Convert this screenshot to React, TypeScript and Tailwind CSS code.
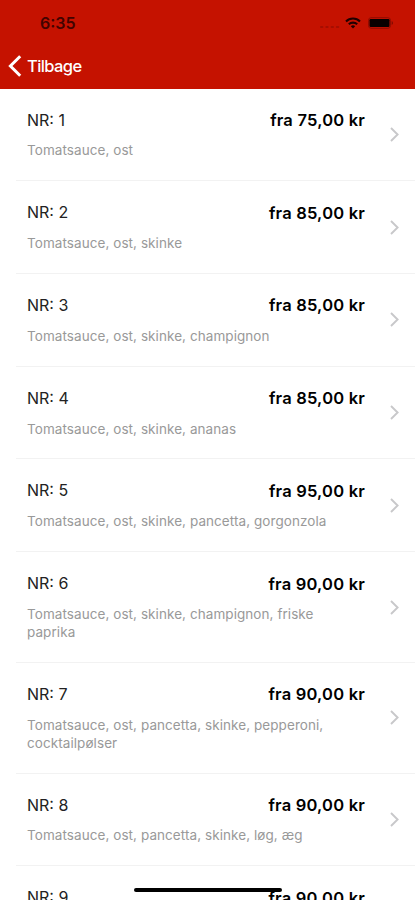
const items = [
  { nr: 1, price: "75,00", text: "Tomatsauce, ost" },
  { nr: 2, price: "85,00", text: "Tomatsauce, ost, skinke" },
  { nr: 3, price: "85,00", text: "Tomatsauce, ost, skinke, champignon" },
  { nr: 4, price: "85,00", text: "Tomatsauce, ost, skinke, ananas" },
  { nr: 5, price: "95,00", text: "Tomatsauce, ost, skinke, pancetta, gorgonzola" },
  { nr: 6, price: "90,00", text: "Tomatsauce, ost, skinke, champignon, friske paprika" },
  { nr: 7, price: "90,00", text: "Tomatsauce, ost, pancetta, skinke, pepperoni, cocktailpølser" },
  { nr: 8, price: "90,00", text: "Tomatsauce, ost, pancetta, skinke, løg, æg" },
  { nr: 9, price: "90,00", text: "" },
];

const StatusBar = () => {
  return (
    <div className="flex h-[46px] items-center justify-between pl-10 pr-[21px] text-[#420300]">
      <span className="text-[16px] font-semibold leading-none">6:35</span>
      <div className="flex items-center">
        <svg width="20" height="3" viewBox="0 0 20 3" className="mt-[8px] mr-[5px]" fill="#a50e00">
          <rect x="0" y="0" width="3.4" height="2" rx="1" />
          <rect x="5.3" y="0" width="3.4" height="2" rx="1" />
          <rect x="10.6" y="0" width="3.4" height="2" rx="1" />
          <rect x="15.9" y="0" width="3.4" height="2" rx="1" />
        </svg>
        <svg width="16" height="12" viewBox="0 0 16 12" fill="none" stroke="#200000" strokeWidth="2.1">
          <path d="M1 4.4a10 10 0 0 1 14 0" />
          <path d="M3.8 7.3a6 6 0 0 1 8.4 0" />
          <path d="M8 11.6 5.8 9.3a3.2 3.2 0 0 1 4.4 0Z" fill="#200000" stroke="none" />
        </svg>
        <svg width="26" height="12" viewBox="0 0 26 12" className="ml-[7px]">
          <rect x="0.5" y="0.7" width="22" height="10.6" rx="2.6" fill="none" stroke="#900c00" />
          <rect x="1.5" y="2" width="20" height="8" rx="1.2" fill="#080000" />
          <path d="M23.7 4c1.7.6 1.7 3.4 0 4Z" fill="#7d0a00" />
        </svg>
      </div>
    </div>
  );
};

const Row = ({ nr, price, text }: { nr: number; price: string; text: string }) => {
  return (
    <li className="ml-4 flex items-center border-b border-[#f2f2f2] pl-[11px] pr-[16px]">
      <div className="flex-1 pt-[21px] pb-[20.75px]">
        <div className="flex h-5 justify-between text-[16px] leading-5">
          <span className="text-[#222]">NR: {nr}</span>
          <span className="mt-[0.5px] text-[16.5px] font-semibold tracking-[0.2px] text-black">fra {price} kr</span>
        </div>
        <p className="mt-[11.8px] mb-[0.2px] w-[306px] min-h-[18px] text-[13.5px] leading-[18px] tracking-[0.07px] text-[#999]">
          {text}
        </p>
      </div>
      <svg width="9" height="15" viewBox="0 0 9 15" className="ml-[25px]" fill="none" stroke="#c8c8ca" strokeWidth="1.9">
        <path d="M1 1l6.6 6.5L1 14" />
      </svg>
    </li>
  );
};

const App = () => {
  return (
    <div className="relative h-[900px] w-[415px] overflow-hidden bg-white font-['Inter',sans-serif]">
      <header className="h-[88.5px] bg-[#c51200]">
        <StatusBar />
        <div className="flex h-[40px] items-center pl-2 text-white">
          <svg width="14" height="22" viewBox="0 0 14 22" fill="none" stroke="white" strokeWidth="3">
            <path d="M12.2 1.2 2.4 11l9.8 9.8" />
          </svg>
          <span className="mt-px ml-[5px] text-[16.5px] font-medium tracking-[-0.6px]">Tilbage</span>
        </div>
      </header>
      <ul>
        {items.map((item) => (
          <Row key={item.nr} {...item} />
        ))}
      </ul>
      <div className="absolute left-[134px] top-[887.5px] h-[4.5px] w-[148px] rounded-full bg-black"></div>
    </div>
  );
};

export default App;
